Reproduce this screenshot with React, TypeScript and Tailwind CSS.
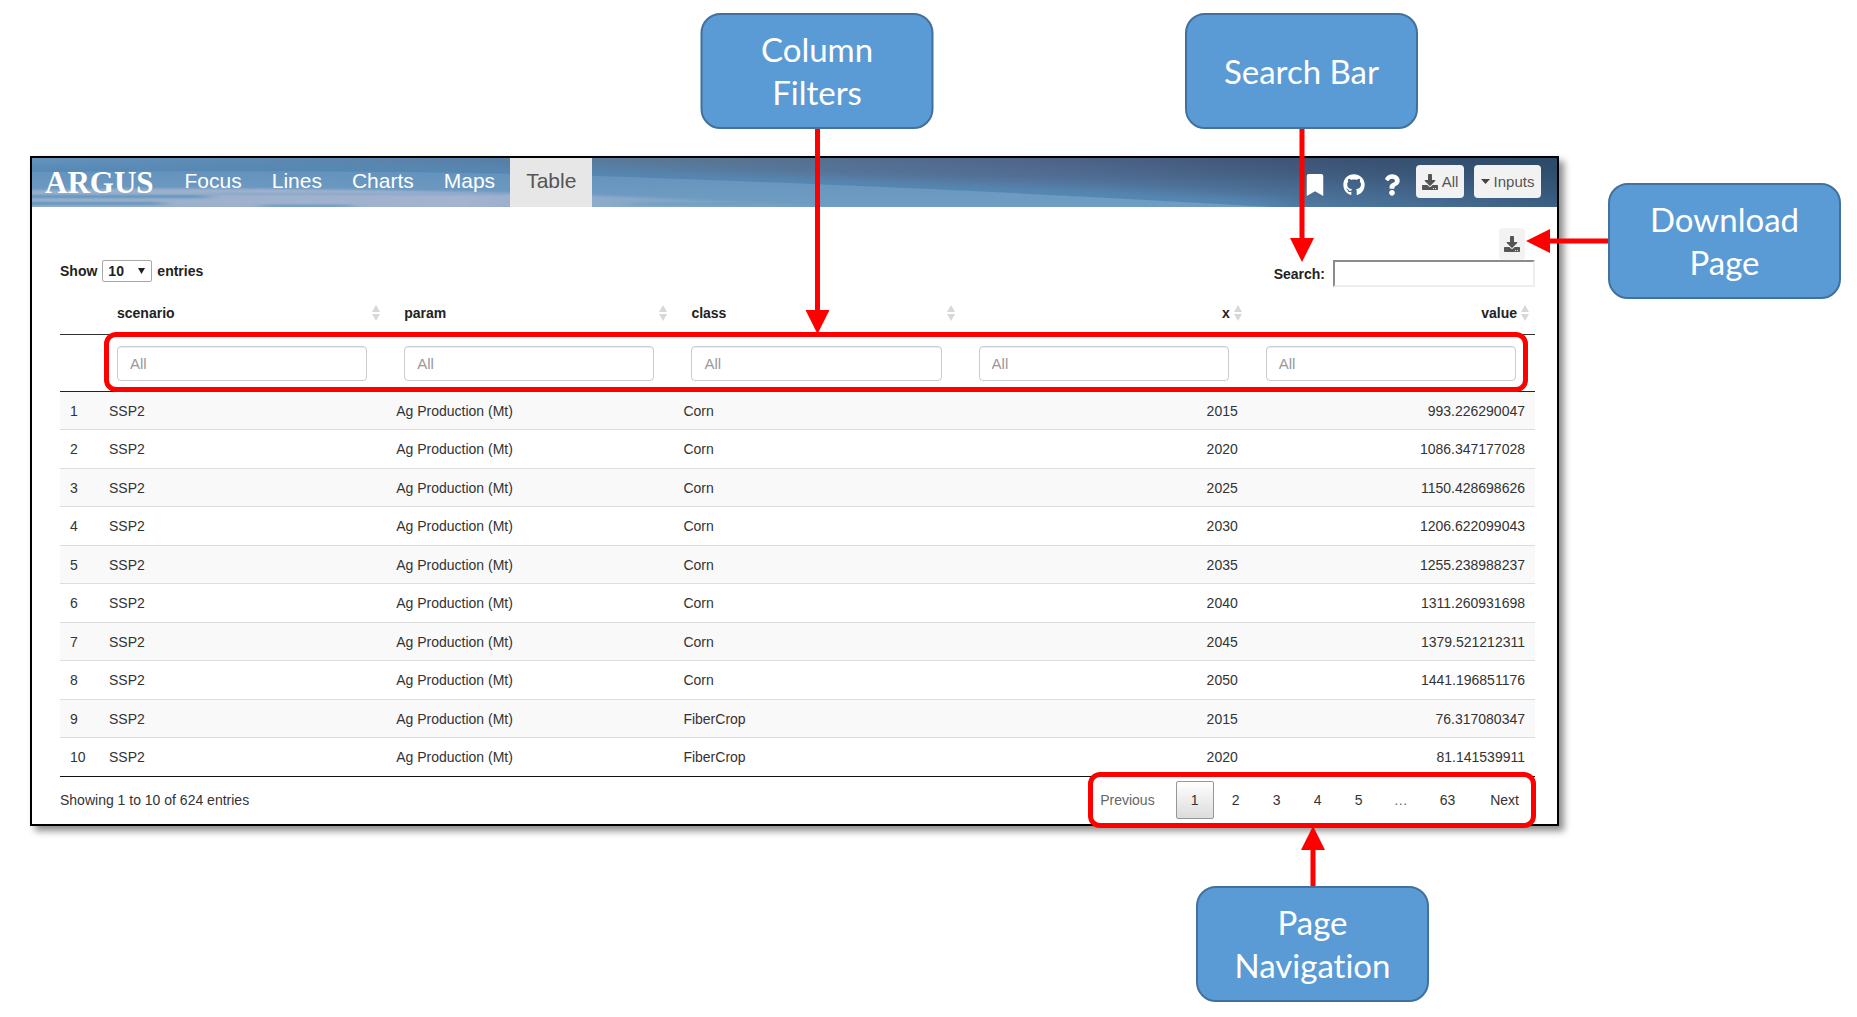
import { ReactNode } from "react";
import { FaBookmark, FaDownload, FaGithub, FaQuestion } from "react-icons/fa";

type Row = { cls: string; x: number; value: string };

const rows: Row[] = [
  { cls: "Corn", x: 2015, value: "993.226290047" },
  { cls: "Corn", x: 2020, value: "1086.347177028" },
  { cls: "Corn", x: 2025, value: "1150.428698626" },
  { cls: "Corn", x: 2030, value: "1206.622099043" },
  { cls: "Corn", x: 2035, value: "1255.238988237" },
  { cls: "Corn", x: 2040, value: "1311.260931698" },
  { cls: "Corn", x: 2045, value: "1379.521212311" },
  { cls: "Corn", x: 2050, value: "1441.196851176" },
  { cls: "FiberCrop", x: 2015, value: "76.317080347" },
  { cls: "FiberCrop", x: 2020, value: "81.141539911" },
];

const columns = [
  { name: "scenario", right: false },
  { name: "param", right: false },
  { name: "class", right: false },
  { name: "x", right: true },
  { name: "value", right: true },
];

const tabs = ["Focus", "Lines", "Charts", "Maps", "Table"];

function Sky() {
  return (
    <svg
      className="absolute inset-0 h-full w-full"
      viewBox="0 0 1525 49"
      preserveAspectRatio="none"
      aria-hidden="true"
    >
      <defs>
        <linearGradient id="base" x1="0" x2="1" y1="0" y2="0">
          <stop offset="0" stopColor="#6494be" />
          <stop offset="0.3" stopColor="#587fa6" />
          <stop offset="0.45" stopColor="#587594" />
          <stop offset="0.65" stopColor="#50648a" />
          <stop offset="0.82" stopColor="#3f5577" />
          <stop offset="1" stopColor="#2c4a69" />
        </linearGradient>
        <linearGradient id="glow" x1="0" x2="0" y1="0" y2="1">
          <stop offset="0" stopColor="#5a8db8" stopOpacity="0" />
          <stop offset="0.3" stopColor="#5a8db8" stopOpacity="0.2" />
          <stop offset="1" stopColor="#588cb8" stopOpacity="1" />
        </linearGradient>
        <linearGradient id="fade" x1="0" x2="1" y1="0" y2="0">
          <stop offset="0.7" stopColor="#fff" />
          <stop offset="1" stopColor="#555" />
        </linearGradient>
        <linearGradient id="horizon" x1="0" x2="0" y1="0" y2="1">
          <stop offset="0" stopColor="#6694be" />
          <stop offset="1" stopColor="#73a0c4" />
        </linearGradient>
        <linearGradient id="cloud" x1="0" x2="1" y1="0" y2="0">
          <stop offset="0" stopColor="#a3b3cd" stopOpacity="0.8" />
          <stop offset="0.55" stopColor="#a3b3d0" stopOpacity="1" />
          <stop offset="1" stopColor="#8fb0cc" stopOpacity="0" />
        </linearGradient>
        <mask id="glowmask">
          <rect width="1525" height="49" fill="url(#fade)" />
        </mask>
        <filter id="soft" x="-5%" y="-50%" width="110%" height="200%">
          <feGaussianBlur stdDeviation="8 1" />
        </filter>
        <filter id="haze" x="-5%" y="-80%" width="110%" height="260%">
          <feGaussianBlur stdDeviation="14 5" />
        </filter>
      </defs>
      <rect width="1525" height="49" fill="url(#base)" />
      <rect width="1525" height="49" fill="url(#glow)" mask="url(#glowmask)" />
      <path
        d="M-40 14C250 12 480 14 620 20C850 28 1050 38 1240 49"
        fill="none"
        stroke="#5588b4"
        strokeWidth="12"
        filter="url(#haze)"
      />
      <path d="M0 14C250 12 480 14 620 20C850 28 1050 38 1240 49H0Z" fill="url(#horizon)" opacity="0.9" />
      <path d="M-30 33C120 28 300 31 520 36C640 40 720 44 820 50H-30Z" fill="url(#cloud)" filter="url(#soft)" />
      <g filter="url(#soft)" fill="#5f96bd">
        <rect x="-20" y="37" width="195" height="3" />
        <rect x="-20" y="44" width="150" height="3" />
        <rect x="180" y="35" width="300" height="2" opacity="0.4" />
        <rect x="230" y="47" width="90" height="2" />
        <rect x="600" y="45" width="120" height="2" opacity="0.6" />
      </g>
    </svg>
  );
}

function SortIcon() {
  return (
    <svg className="h-4 w-2 shrink-0" viewBox="0 0 8 16" fill="#d8d8d8" aria-hidden="true">
      <path d="M4 0L8 7H0ZM4 16L0 9H8Z" />
    </svg>
  );
}

function Callout({ children }: { children: ReactNode }) {
  return (
    <div className="flex h-[116px] w-[233px] shrink-0 items-center justify-center rounded-[20px] border-2 border-[#41719c] bg-[#5b9bd5] px-8 text-center font-['Lato',sans-serif] text-[33px] leading-[43px] text-white [font-variant-ligatures:none]">
      {children}
    </div>
  );
}

function Arrow({ length, up = false }: { length: number; up?: boolean }) {
  const path = up
    ? `M12 0L24 24H14.5V${length}H9.5V24H0Z`
    : `M9.5 0H14.5V${length - 24}H24L12 ${length}L0 ${length - 24}H9.5Z`;
  return (
    <svg className="shrink-0" width="24" height={length} viewBox={`0 0 24 ${length}`} fill="#f00" aria-hidden="true">
      <path d={path} />
    </svg>
  );
}

const pageButton =
  "h-[38px] min-w-[38px] rounded-[2px] border border-transparent px-[14px] text-[#333]";

export default function App() {
  return (
    <main className="relative min-h-screen bg-white font-['Liberation_Sans',Arial,sans-serif] text-sm text-[#333]">
      <div className="pt-[156px] pr-[298px] pl-[30px]">
        <section className="border-2 border-black bg-white shadow-[5px_5px_7px_rgba(0,0,0,0.45)]">
          <header className="relative flex h-[49px] items-stretch justify-between">
            <Sky />
            <nav className="relative flex items-stretch text-[21px]" aria-label="Main">
              <a
                href="#home"
                className="flex items-center pr-4 pl-[13px] font-['Liberation_Serif',serif] text-[31px] leading-none font-bold text-white"
              >
                ARGUS
              </a>
              {tabs.map((t) => (
                <a
                  key={t}
                  href={"#" + t.toLowerCase()}
                  aria-current={t === "Table" ? "page" : undefined}
                  className={
                    t === "Table"
                      ? "flex items-center bg-[#e7e7e7] px-4 pb-1 text-[#555]"
                      : "flex items-center px-[15px] pb-1 text-white"
                  }
                >
                  {t}
                </a>
              ))}
            </nav>
            <div className="relative flex items-center pr-4 text-white">
              <button type="button" aria-label="Bookmark" className="mr-[19px]">
                <FaBookmark className="mt-1 h-[22px] w-[18px]" />
              </button>
              <button type="button" aria-label="GitHub" className="mr-[19px]">
                <FaGithub className="mt-1 size-[22px]" />
              </button>
              <button type="button" aria-label="Help" className="mr-4">
                <FaQuestion className="mt-1 h-[22px] w-4" />
              </button>
              <button
                type="button"
                className="mr-[10px] mb-[2px] flex h-[33px] w-12 items-center justify-center gap-1 rounded bg-[#f2f2f2] text-[15px] text-[#555]"
              >
                <FaDownload className="size-4 text-[#555]" />
                All
              </button>
              <button
                type="button"
                className="mb-[2px] flex h-[33px] w-[67px] items-center justify-center gap-1 rounded bg-[#f2f2f2] text-[15px] text-[#555]"
              >
                <svg className="h-[5px] w-[9px]" viewBox="0 0 9 5" fill="#444" aria-hidden="true">
                  <path d="M0 0H9L4.500 5Z" />
                </svg>
                Inputs
              </button>
            </div>
          </header>

          <div className="pr-[22px] pl-[28px]">
            <div className="flex items-end justify-between pt-[21px] font-bold text-[#222]">
              <label className="mb-[5px] flex items-center gap-[5px]">
                Show
                <span className="relative flex">
                  <select
                    defaultValue="10"
                    className="h-[22px] w-[50px] appearance-none rounded-[2px] border border-[#a9a9a9] bg-white pl-[5px] font-bold"
                  >
                    <option>10</option>
                    <option>25</option>
                    <option>50</option>
                    <option>100</option>
                  </select>
                  <svg
                    className="pointer-events-none absolute top-[8px] right-[7px] h-[6px] w-[7px]"
                    viewBox="0 0 7 6"
                    fill="#222"
                    aria-hidden="true"
                  >
                    <path d="M0 0H7L3.500 6Z" />
                  </svg>
                </span>
                entries
              </label>
              <div className="flex flex-col items-end">
                <button
                  type="button"
                  aria-label="Download page"
                  className="mr-[10px] flex h-8 w-[26px] items-center justify-center rounded bg-[#f2f2f2]"
                >
                  <FaDownload className="size-4 text-[#555]" />
                </button>
                <label className="flex items-center gap-2">
                  Search:
                  <input
                    type="search"
                    className="h-[27px] w-[202px] border-2 border-t-[#8c8c8c] border-r-[#eee] border-b-[#eee] border-l-[#8c8c8c] bg-white px-1 font-normal"
                  />
                </label>
              </div>
            </div>

            <table className="w-full table-fixed border-separate border-spacing-0">
              <colgroup>
                <col className="w-[39px]" />
                <col />
                <col />
                <col />
                <col />
                <col />
              </colgroup>
              <thead className="text-[#222]">
                <tr className="h-12">
                  <td className="border-b border-[#333]" />
                  {columns.map((c) => (
                    <th key={c.name} scope="col" className="border-b border-[#333] pt-1 pr-[6px] pl-[18px]">
                      <span className={c.right ? "flex items-center justify-end gap-1" : "flex items-center justify-between"}>
                        {c.name}
                        <SortIcon />
                      </span>
                    </th>
                  ))}
                </tr>
                <tr className="relative h-[57px]">
                  <td className="border-b border-[#222]">
                    <span className="pointer-events-none absolute -top-[3px] right-[7px] bottom-0 left-11 rounded-xl border-[5px] border-[#f00]" />
                  </td>
                  {columns.map((c) => (
                    <td key={c.name} className="border-b border-[#222] pr-[19px] pl-[18px]">
                      <input
                        type="text"
                        placeholder="All"
                        aria-label={"Filter " + c.name}
                        className="block h-[35px] w-full rounded border border-[#ccc] bg-white px-3 text-[15px] shadow-[inset_0_1px_1px_rgba(0,0,0,0.075)] placeholder:text-[#999]"
                      />
                    </td>
                  ))}
                </tr>
              </thead>
              <tbody className="[&_td]:border-b [&_td]:border-[#ddd] [&_td]:px-[10px] [&_tr:last-child_td]:border-[#111]">
                {rows.map((r, i) => (
                  <tr key={i} className="h-[39px] odd:h-[38px] odd:bg-[#f9f9f9]">
                    <td>{i + 1}</td>
                    <td>SSP2</td>
                    <td>Ag Production (Mt)</td>
                    <td>{r.cls}</td>
                    <td className="text-right">{r.x}</td>
                    <td className="text-right">{r.value}</td>
                  </tr>
                ))}
              </tbody>
            </table>

            <footer className="flex items-center justify-between pt-1 pb-[5px]">
              <p>Showing 1 to 10 of 624 entries</p>
              <nav className="relative flex items-center gap-[3px]" aria-label="Pages">
                <span className="pointer-events-none absolute -top-[9px] -right-px -bottom-[9px] -left-[2px] rounded-xl border-[5px] border-[#f00]" />
                <button type="button" disabled className="h-[38px] pr-[18px] pl-[10px] text-[#666]">
                  Previous
                </button>
                <button
                  type="button"
                  aria-current="page"
                  className="h-[38px] min-w-[38px] rounded-[2px] border border-[#979797] bg-linear-to-b from-white to-[#dcdcdc] text-[#333]"
                >
                  1
                </button>
                {["2", "3", "4", "5"].map((p) => (
                  <button key={p} type="button" className={pageButton}>
                    {p}
                  </button>
                ))}
                <span className="px-[13px] text-[#666]">…</span>
                <button type="button" className="h-[38px] px-4 text-[#333]">
                  63
                </button>
                <button type="button" className="h-[38px] px-4 text-[#333]">
                  Next
                </button>
              </nav>
            </footer>
          </div>
        </section>
      </div>

      <div className="pointer-events-none absolute top-[13px] left-[44%] flex -translate-x-1/2 flex-col items-center">
        <Callout>Column Filters</Callout>
        <Arrow length={205} />
      </div>
      <div className="pointer-events-none absolute top-[13px] right-[439px] flex flex-col items-center">
        <Callout>Search Bar</Callout>
        <Arrow length={133} />
      </div>
      <div className="pointer-events-none absolute top-[183px] right-4 flex items-center">
        <svg width="82" height="24" viewBox="0 0 82 24" fill="#f00" aria-hidden="true">
          <path d="M0 12L24 0V9.500H82V14.500H24V24Z" />
        </svg>
        <Callout>Download Page</Callout>
      </div>
      <div className="pointer-events-none absolute top-[826px] right-[428px] flex flex-col items-center">
        <Arrow length={60} up />
        <Callout>Page Navigation</Callout>
      </div>
    </main>
  );
}
